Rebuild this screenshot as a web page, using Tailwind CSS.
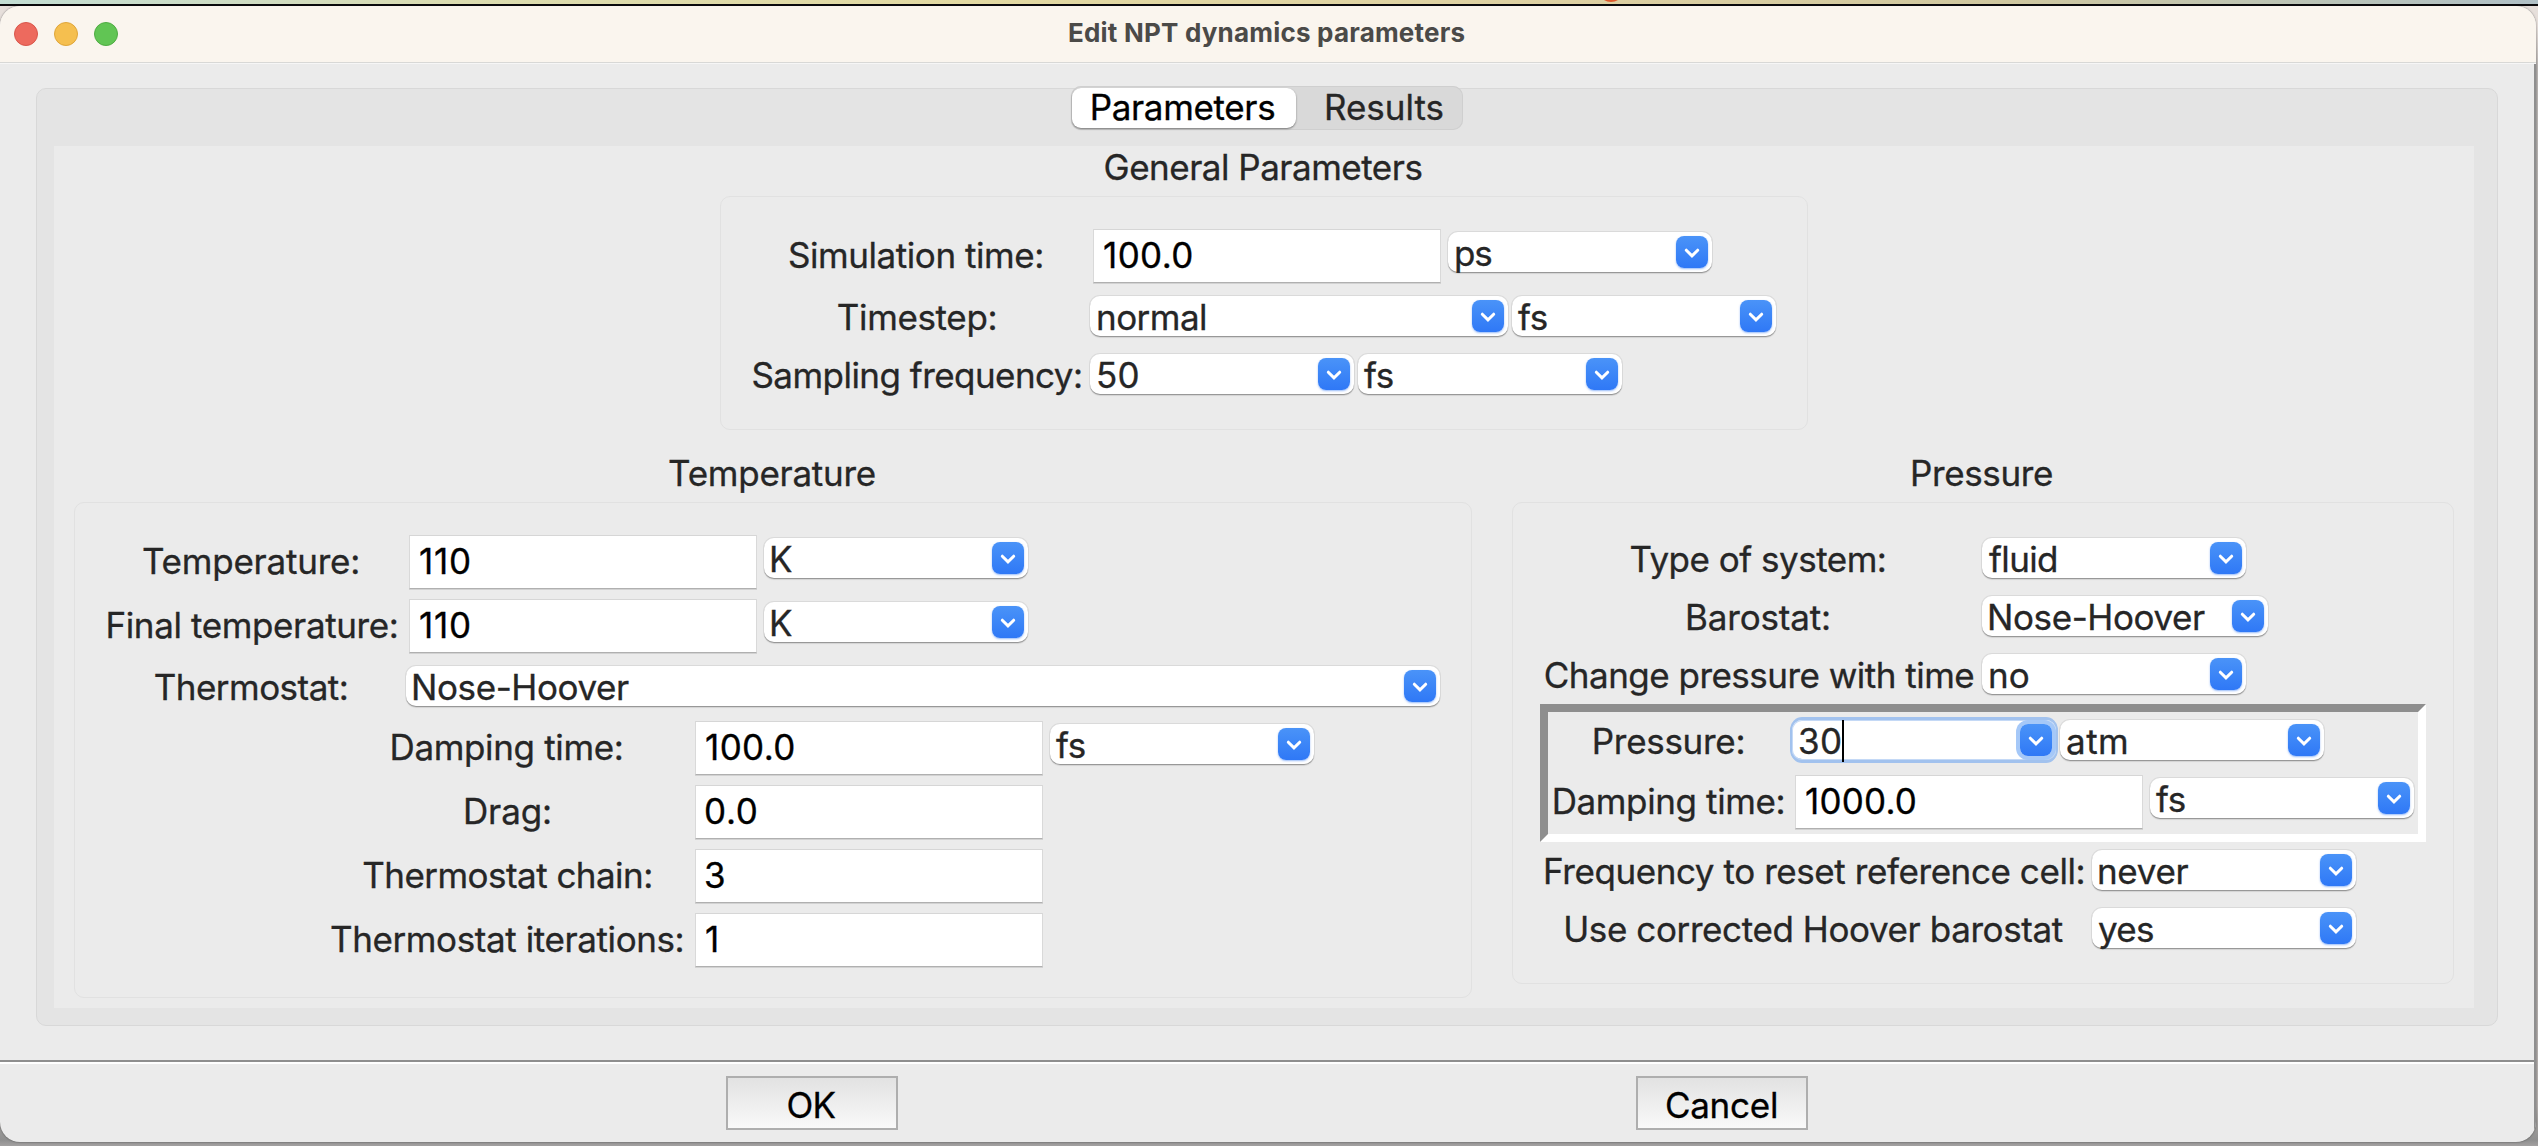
<!DOCTYPE html>
<html lang="en">
<head>
<meta charset="utf-8">
<title>Edit NPT dynamics parameters</title>
<script src="https://cdn.jsdelivr.net/npm/@tailwindcss/browser@4"></script>
</head>
<body class="w-[2538px] h-[1146px] overflow-hidden bg-[#b9b5b3] font-['Inter',sans-serif] text-[35px] leading-[42px] tracking-[-0.4px] text-[#262626] whitespace-nowrap [-webkit-text-stroke:0.3px]">

<!-- shared combo arrow -->
<svg class="hidden">
  <symbol id="arrow" viewBox="0 0 32 32">
    <path d="M10.3 14.2 16 19.9l5.700-5.700" fill="none" stroke="#fff" stroke-width="3" stroke-linecap="round" stroke-linejoin="miter"/>
  </symbol>
</svg>

<!-- desktop strip above the window -->
<div class="relative h-1 overflow-hidden bg-[linear-gradient(90deg,#c2ddd3_0%,#cfdcc2_10%,#dbdcb0_18%,#e2d9a2_38%,#ddd0a2_62%,#cfc79f_79%,#b9c3b8_92%,#b0c0c6_100%)]">
  <div class="absolute left-[1598px] -top-[24px] size-[26px] rounded-full bg-[#dd5a2c]"></div>
</div>
<div class="h-0.5 bg-[#0b0b0d]"></div>

<div class="h-[1140px] bg-[linear-gradient(180deg,#e6dfdb_0px,#e6dfdb_20px,#b9b5b3_60px,#b3afad_1100px,#8f8f8f_1134px,#a3a1a1_1140px)]">
  <div class="flex flex-col w-[2536px] h-[1136px] rounded-[20px] overflow-hidden bg-[#ebebeb] shadow-[0_0_2px_rgba(0,0,0,0.5)]">

    <!-- title bar -->
    <header class="relative h-[58px] shrink-0 bg-[#faf5ee] border-b border-[#f6f6f6]">
      <div class="h-[57px] border-b border-[#d8d8d6] flex items-start">
        <div class="flex gap-4 ml-3.5 mt-4">
          <span class="size-6 rounded-full bg-[#ed6a5e] border border-[#d8564b]"></span>
          <span class="size-6 rounded-full bg-[#f5bf4f] border border-[#dea53a]"></span>
          <span class="size-6 rounded-full bg-[#61c554] border border-[#4fab43]"></span>
        </div>
        <h1 class="ml-[950px] text-[26px] leading-[53px] font-bold tracking-[0.2px] text-[#4b4a48] [-webkit-text-stroke:0px]">Edit NPT dynamics parameters</h1>
      </div>
    </header>

    <div class="relative flex flex-col flex-1 border-r-2 border-[#8f8f8f]">
      <!-- tab pane -->
      <section class="flex flex-col mt-6 ml-9 w-[2462px] h-[938px] rounded-[10px] border border-[#d8d8d8] bg-[#e4e4e4]">
        <nav class="flex self-center -mt-[3px] w-[392px] h-11 p-px pt-0.5 rounded-[10px] bg-[#d9d9d9] shadow-[inset_0_0_0_1px_#cfcfcf]">
          <div class="w-56 h-10 rounded-[9px] bg-white text-black text-center leading-[38px] pr-[3px] tracking-[-0.34px] shadow-[0_1px_2px_rgba(0,0,0,0.45)]">Parameters</div>
          <div class="flex-1 text-center leading-[38px] pl-2.5 tracking-[0px]">Results</div>
        </nav>

        <main class="mt-4 ml-[17px] w-[2420px] h-[862px] bg-[#ebebeb]">
          <!-- general parameters -->
          <h2 class="h-[50px] pr-0.5 text-center tracking-[-0.5px]">General Parameters</h2>
          <div class="mx-auto w-[1088px] h-[234px] rounded-[10px] border border-[#e1e1e1] pt-8 pl-[29px]">
            <div class="flex h-[54px]">
              <label class="w-[334px] pr-0.5 text-center leading-[52px] tracking-[-0.44px]">Simulation time:</label>
              <div class="ml-[9px] w-[348px] h-[54px] bg-white border border-t-[#d6d6d6] border-x-[#d9d9d9] border-b-[#b0b0b0] shadow-[0_1px_0_#d2d2d2] pl-[9px] leading-[50px] tracking-[0.4px] text-black">100.0</div>
              <div class="flex justify-between mt-[3px] ml-[7px] w-[264px] h-10 rounded-[10px] bg-white pl-1.5 pr-1 shadow-[0_0_0_1px_rgba(0,0,0,0.07),0_1px_0_rgba(0,0,0,0.22),0_2px_1px_rgba(0,0,0,0.1)]"><span class="tracking-[-1.2px]">ps</span><svg class="size-8 mt-1 rounded-lg bg-linear-to-b from-[#4a93f8] to-[#2f78f6] shadow-[0_1px_2px_rgba(47,120,246,0.5)]"><use href="#arrow"/></svg></div>
            </div>
            <div class="flex h-10 mt-[13px]">
              <label class="w-[334px] text-center tracking-[-0.36px]">Timestep:</label>
              <div class="flex justify-between ml-1.5 w-[418px] h-10 rounded-[10px] bg-white pl-1.5 pr-1 shadow-[0_0_0_1px_rgba(0,0,0,0.07),0_1px_0_rgba(0,0,0,0.22),0_2px_1px_rgba(0,0,0,0.1)]"><span class="tracking-[-0.54px]">normal</span><svg class="size-8 mt-1 rounded-lg bg-linear-to-b from-[#4a93f8] to-[#2f78f6] shadow-[0_1px_2px_rgba(47,120,246,0.5)]"><use href="#arrow"/></svg></div>
              <div class="flex justify-between ml-1 w-[264px] h-10 rounded-[10px] bg-white pl-1.5 pr-1 shadow-[0_0_0_1px_rgba(0,0,0,0.07),0_1px_0_rgba(0,0,0,0.22),0_2px_1px_rgba(0,0,0,0.1)]"><span>fs</span><svg class="size-8 mt-1 rounded-lg bg-linear-to-b from-[#4a93f8] to-[#2f78f6] shadow-[0_1px_2px_rgba(47,120,246,0.5)]"><use href="#arrow"/></svg></div>
            </div>
            <div class="flex h-10 mt-[18px]">
              <label class="w-[334px] text-center tracking-[-0.54px]">Sampling frequency:</label>
              <div class="flex justify-between ml-1.5 w-[264px] h-10 rounded-[10px] bg-white pl-1.5 pr-1 shadow-[0_0_0_1px_rgba(0,0,0,0.07),0_1px_0_rgba(0,0,0,0.22),0_2px_1px_rgba(0,0,0,0.1)]"><span class="tracking-[0.2px]">50</span><svg class="size-8 mt-1 rounded-lg bg-linear-to-b from-[#4a93f8] to-[#2f78f6] shadow-[0_1px_2px_rgba(47,120,246,0.5)]"><use href="#arrow"/></svg></div>
              <div class="flex justify-between ml-1 w-[264px] h-10 rounded-[10px] bg-white pl-1.5 pr-1 shadow-[0_0_0_1px_rgba(0,0,0,0.07),0_1px_0_rgba(0,0,0,0.22),0_2px_1px_rgba(0,0,0,0.1)]"><span>fs</span><svg class="size-8 mt-1 rounded-lg bg-linear-to-b from-[#4a93f8] to-[#2f78f6] shadow-[0_1px_2px_rgba(47,120,246,0.5)]"><use href="#arrow"/></svg></div>
            </div>
          </div>

          <div class="flex items-start gap-10 mt-[22px] ml-5">
            <!-- temperature -->
            <section class="w-[1398px]">
              <h2 class="h-[50px] pr-0.5 text-center tracking-[-0.27px]">Temperature</h2>
              <div class="h-[496px] rounded-[10px] border border-[#e1e1e1] pt-8 pl-[25px]">
                <div class="flex h-[54px]">
                  <label class="w-[304px] pr-0.5 text-center leading-[52px] tracking-[-0.22px]">Temperature:</label>
                  <div class="ml-[5px] w-[348px] h-[54px] bg-white border border-t-[#d6d6d6] border-x-[#d9d9d9] border-b-[#b0b0b0] shadow-[0_1px_0_#d2d2d2] pl-[9px] leading-[50px] tracking-[0.8px] text-black">110</div>
                  <div class="flex justify-between mt-[3px] ml-[7px] w-[264px] h-10 rounded-[10px] bg-white pl-[5px] pr-1 shadow-[0_0_0_1px_rgba(0,0,0,0.07),0_1px_0_rgba(0,0,0,0.22),0_2px_1px_rgba(0,0,0,0.1)]"><span>K</span><svg class="size-8 mt-1 rounded-lg bg-linear-to-b from-[#4a93f8] to-[#2f78f6] shadow-[0_1px_2px_rgba(47,120,246,0.5)]"><use href="#arrow"/></svg></div>
                </div>
                <div class="flex h-[54px] mt-2.5">
                  <label class="w-[304px] text-center leading-[52px] tracking-[-0.38px]">Final temperature:</label>
                  <div class="ml-[5px] w-[348px] h-[54px] bg-white border border-t-[#d6d6d6] border-x-[#d9d9d9] border-b-[#b0b0b0] shadow-[0_1px_0_#d2d2d2] pl-[9px] leading-[50px] tracking-[0.8px] text-black">110</div>
                  <div class="flex justify-between mt-[3px] ml-[7px] w-[264px] h-10 rounded-[10px] bg-white pl-[5px] pr-1 shadow-[0_0_0_1px_rgba(0,0,0,0.07),0_1px_0_rgba(0,0,0,0.22),0_2px_1px_rgba(0,0,0,0.1)]"><span>K</span><svg class="size-8 mt-1 rounded-lg bg-linear-to-b from-[#4a93f8] to-[#2f78f6] shadow-[0_1px_2px_rgba(47,120,246,0.5)]"><use href="#arrow"/></svg></div>
                </div>
                <div class="flex h-10 mt-[13px]">
                  <label class="w-[304px] pr-0.5 text-center tracking-[-0.53px]">Thermostat:</label>
                  <div class="flex justify-between ml-0.5 w-[1034px] h-10 rounded-[10px] bg-white pl-[5px] pr-1 shadow-[0_0_0_1px_rgba(0,0,0,0.07),0_1px_0_rgba(0,0,0,0.22),0_2px_1px_rgba(0,0,0,0.1)]"><span>Nose-Hoover</span><svg class="size-8 mt-1 rounded-lg bg-linear-to-b from-[#4a93f8] to-[#2f78f6] shadow-[0_1px_2px_rgba(47,120,246,0.5)]"><use href="#arrow"/></svg></div>
                </div>
                <div class="flex flex-col gap-2.5 mt-[15px] ml-[230px]">
                  <div class="flex h-[54px]">
                    <label class="w-[355px] pr-0.5 text-center leading-[52px] tracking-[-0.35px]">Damping time:</label>
                    <div class="ml-2.5 w-[348px] h-[54px] bg-white border border-t-[#d6d6d6] border-x-[#d9d9d9] border-b-[#b0b0b0] shadow-[0_1px_0_#d2d2d2] pl-[9px] leading-[50px] tracking-[0.4px] text-black">100.0</div>
                    <div class="flex justify-between mt-[3px] ml-[7px] w-[264px] h-10 rounded-[10px] bg-white pl-1.5 pr-1 shadow-[0_0_0_1px_rgba(0,0,0,0.07),0_1px_0_rgba(0,0,0,0.22),0_2px_1px_rgba(0,0,0,0.1)]"><span>fs</span><svg class="size-8 mt-1 rounded-lg bg-linear-to-b from-[#4a93f8] to-[#2f78f6] shadow-[0_1px_2px_rgba(47,120,246,0.5)]"><use href="#arrow"/></svg></div>
                  </div>
                  <div class="flex h-[54px]">
                    <label class="w-[355px] text-center leading-[52px] tracking-[-0.1px]">Drag:</label>
                    <div class="ml-2.5 w-[348px] h-[54px] bg-white border border-t-[#d6d6d6] border-x-[#d9d9d9] border-b-[#b0b0b0] shadow-[0_1px_0_#d2d2d2] pl-2 leading-[50px] tracking-[0.7px] text-black">0.0</div>
                  </div>
                  <div class="flex h-[54px]">
                    <label class="w-[355px] text-center leading-[52px] tracking-[-0.54px]">Thermostat chain:</label>
                    <div class="ml-2.5 w-[348px] h-[54px] bg-white border border-t-[#d6d6d6] border-x-[#d9d9d9] border-b-[#b0b0b0] shadow-[0_1px_0_#d2d2d2] pl-2 leading-[50px] text-black">3</div>
                  </div>
                  <div class="flex h-[54px]">
                    <label class="w-[355px] pr-0.5 text-center leading-[52px]">Thermostat iterations:</label>
                    <div class="ml-2.5 w-[348px] h-[54px] bg-white border border-t-[#d6d6d6] border-x-[#d9d9d9] border-b-[#b0b0b0] shadow-[0_1px_0_#d2d2d2] pl-[9px] leading-[50px] text-black">1</div>
                  </div>
                </div>
              </div>
            </section>

            <!-- pressure -->
            <section class="w-[942px]">
              <h2 class="h-[50px] pr-[3px] text-center tracking-[-0.35px]">Pressure</h2>
              <div class="h-[482px] rounded-[10px] border border-[#e1e1e1] pt-[35px] pl-[27px]">
                <div class="flex flex-col gap-[18px] ml-[3px]">
                  <div class="flex h-10">
                    <label class="w-[432px] pr-0.5 text-center tracking-[-0.5px]">Type of system:</label>
                    <div class="flex justify-between ml-[7px] w-[264px] h-10 rounded-[10px] bg-white pl-[7px] pr-1 shadow-[0_0_0_1px_rgba(0,0,0,0.07),0_1px_0_rgba(0,0,0,0.22),0_2px_1px_rgba(0,0,0,0.1)]"><span class="tracking-[-0.65px]">fluid</span><svg class="size-8 mt-1 rounded-lg bg-linear-to-b from-[#4a93f8] to-[#2f78f6] shadow-[0_1px_2px_rgba(47,120,246,0.5)]"><use href="#arrow"/></svg></div>
                  </div>
                  <div class="flex h-10">
                    <label class="w-[432px] pr-0.5 text-center tracking-[-0.15px]">Barostat:</label>
                    <div class="flex justify-between ml-[7px] w-[286px] h-10 rounded-[10px] bg-white pl-[5px] pr-1 shadow-[0_0_0_1px_rgba(0,0,0,0.07),0_1px_0_rgba(0,0,0,0.22),0_2px_1px_rgba(0,0,0,0.1)]"><span>Nose-Hoover</span><svg class="size-8 mt-1 rounded-lg bg-linear-to-b from-[#4a93f8] to-[#2f78f6] shadow-[0_1px_2px_rgba(47,120,246,0.5)]"><use href="#arrow"/></svg></div>
                  </div>
                  <div class="flex h-10">
                    <label class="w-[432px] text-center tracking-[-0.52px]">Change pressure with time</label>
                    <div class="flex justify-between ml-[7px] w-[264px] h-10 rounded-[10px] bg-white pl-1.5 pr-1 shadow-[0_0_0_1px_rgba(0,0,0,0.07),0_1px_0_rgba(0,0,0,0.22),0_2px_1px_rgba(0,0,0,0.1)]"><span class="tracking-[0px]">no</span><svg class="size-8 mt-1 rounded-lg bg-linear-to-b from-[#4a93f8] to-[#2f78f6] shadow-[0_1px_2px_rgba(47,120,246,0.5)]"><use href="#arrow"/></svg></div>
                  </div>
                </div>

                <!-- sunken frame -->
                <div class="mt-2.5 w-[886px] h-[138px] border-8 border-t-[#8e8e8e] border-l-[#8e8e8e] border-r-white border-b-white pt-2">
                  <div class="flex h-10">
                    <label class="w-[241px] text-center tracking-[-0.3px]">Pressure:</label>
                    <div class="relative flex justify-between ml-[3px] w-[264px] h-10 rounded-[10px] bg-white pl-1.5 pr-1 shadow-[inset_0_0_0_1px_#c4d9f6,inset_0_-1px_0_#8fb3e4,0_0_0_2px_#a2c2ee,0_-2px_0_1px_#a2c2ee,0_2px_0_1px_#a2c2ee]">
                      <span class="tracking-[0.4px]">30</span>
                      <span class="absolute left-[50px] top-0 w-0.5 h-[42px] bg-black"></span>
                      <svg class="size-8 mt-1 rounded-lg bg-linear-to-b from-[#4a93f8] to-[#2f78f6] shadow-[0_0_0_4px_#a5c8f8]"><use href="#arrow"/></svg>
                    </div>
                    <div class="flex justify-between ml-1 w-[264px] h-10 rounded-[10px] bg-white pl-1.5 pr-1 shadow-[0_0_0_1px_rgba(0,0,0,0.07),0_1px_0_rgba(0,0,0,0.22),0_2px_1px_rgba(0,0,0,0.1)]"><span class="tracking-[0.5px]">atm</span><svg class="size-8 mt-1 rounded-lg bg-linear-to-b from-[#4a93f8] to-[#2f78f6] shadow-[0_1px_2px_rgba(47,120,246,0.5)]"><use href="#arrow"/></svg></div>
                  </div>
                  <div class="flex h-[54px] mt-[15px]">
                    <label class="w-[241px] text-center leading-[52px] tracking-[-0.38px]">Damping time:</label>
                    <div class="ml-1.5 w-[348px] h-[54px] bg-white border border-t-[#d6d6d6] border-x-[#d9d9d9] border-b-[#b0b0b0] shadow-[0_1px_0_#d2d2d2] pl-[9px] leading-[50px] tracking-[0.2px] text-black">1000.0</div>
                    <div class="flex justify-between mt-[3px] ml-[7px] w-[264px] h-10 rounded-[10px] bg-white pl-1.5 pr-1 shadow-[0_0_0_1px_rgba(0,0,0,0.07),0_1px_0_rgba(0,0,0,0.22),0_2px_1px_rgba(0,0,0,0.1)]"><span>fs</span><svg class="size-8 mt-1 rounded-lg bg-linear-to-b from-[#4a93f8] to-[#2f78f6] shadow-[0_1px_2px_rgba(47,120,246,0.5)]"><use href="#arrow"/></svg></div>
                  </div>
                </div>

                <div class="flex flex-col gap-[18px] mt-2 ml-[3px]">
                  <div class="flex h-10">
                    <label class="w-[542px] text-center tracking-[-0.42px]">Frequency to reset reference cell:</label>
                    <div class="flex justify-between ml-[7px] w-[264px] h-10 rounded-[10px] bg-white pl-[5px] pr-1 shadow-[0_0_0_1px_rgba(0,0,0,0.07),0_1px_0_rgba(0,0,0,0.22),0_2px_1px_rgba(0,0,0,0.1)]"><span class="tracking-[-0.32px]">never</span><svg class="size-8 mt-1 rounded-lg bg-linear-to-b from-[#4a93f8] to-[#2f78f6] shadow-[0_1px_2px_rgba(47,120,246,0.5)]"><use href="#arrow"/></svg></div>
                  </div>
                  <div class="flex h-10">
                    <label class="w-[542px] pr-0.5 text-center">Use corrected Hoover barostat</label>
                    <div class="flex justify-between ml-[7px] w-[264px] h-10 rounded-[10px] bg-white pl-1.5 pr-1 shadow-[0_0_0_1px_rgba(0,0,0,0.07),0_1px_0_rgba(0,0,0,0.22),0_2px_1px_rgba(0,0,0,0.1)]"><span class="tracking-[-0.7px]">yes</span><svg class="size-8 mt-1 rounded-lg bg-linear-to-b from-[#4a93f8] to-[#2f78f6] shadow-[0_1px_2px_rgba(47,120,246,0.5)]"><use href="#arrow"/></svg></div>
                  </div>
                </div>
              </div>
            </section>
          </div>
        </main>
      </section>

      <!-- button bar -->
      <footer class="mt-[34px] h-[82px] border-t-2 border-[#8e8e8e]">
        <div class="flex gap-[738px] border-t-2 border-white pt-3 pl-[726px] text-black text-center">
          <button class="w-[172px] h-[54px] pr-0.5 border-2 border-[#aeaeae] bg-linear-to-b from-[#e2e2e2] to-[#f9f9f9] leading-[54px] tracking-[-0.7px]">OK</button>
          <button class="w-[172px] h-[54px] pr-px border-2 border-[#aeaeae] bg-linear-to-b from-[#e2e2e2] to-[#f9f9f9] leading-[54px] tracking-[-0.26px]">Cancel</button>
        </div>
      </footer>
    </div>
  </div>
</div>
</body>
</html>
